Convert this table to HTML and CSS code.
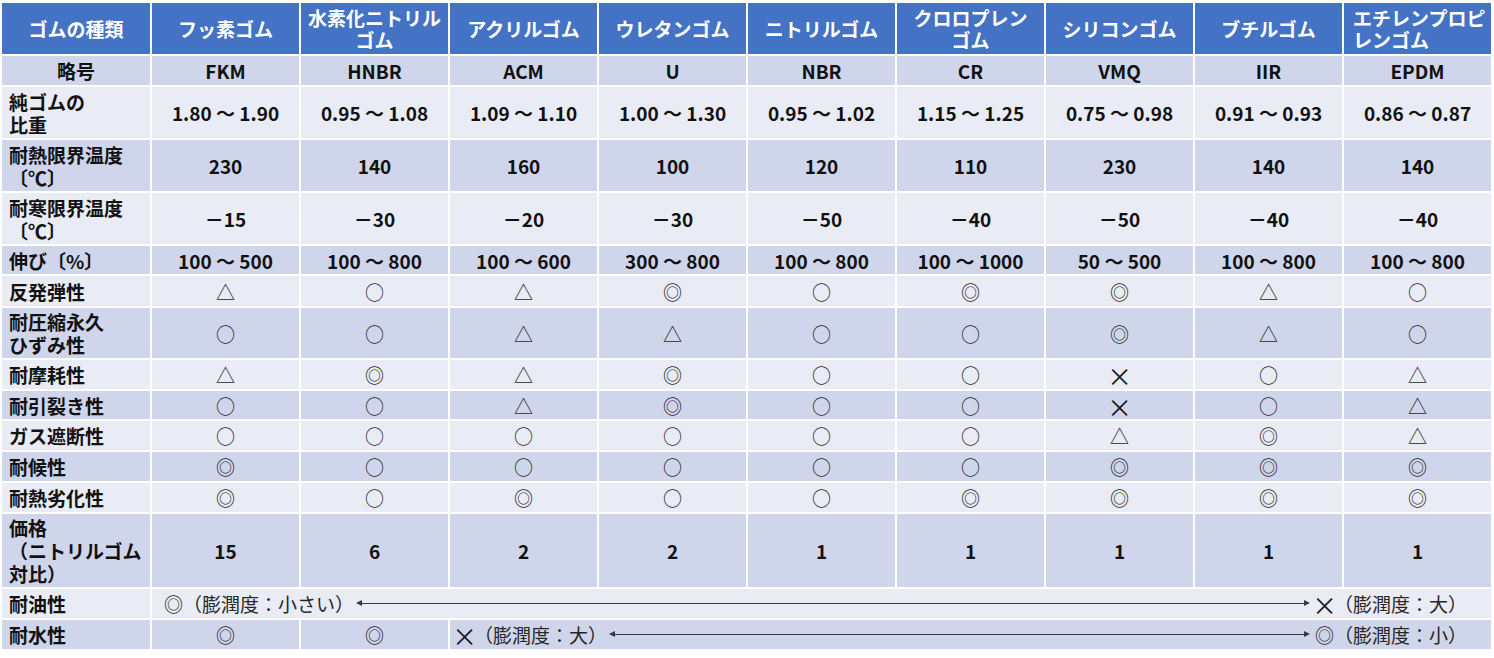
FILE: index.html
```html
<!DOCTYPE html>
<html lang="ja">
<head>
<meta charset="utf-8">
<title>ゴムの種類と特性</title>
<link rel="stylesheet" href="styles.css">
</head>
<body>
<div class="sheet">
  <div class="row head">
    <div class="cell">ゴムの種類</div>
    <div class="cell">フッ素ゴム</div>
    <div class="cell">水素化ニトリル<br>ゴム</div>
    <div class="cell">アクリルゴム</div>
    <div class="cell">ウレタンゴム</div>
    <div class="cell">ニトリルゴム</div>
    <div class="cell">クロロプレン<br>ゴム</div>
    <div class="cell">シリコンゴム</div>
    <div class="cell">ブチルゴム</div>
    <div class="cell cell-left">エチレンプロピ<br>レンゴム</div>
  </div>
  <div class="row dark">
    <div class="cell label label-center">略号</div>
    <div class="cell">FKM</div><div class="cell">HNBR</div><div class="cell">ACM</div><div class="cell">U</div><div class="cell">NBR</div><div class="cell">CR</div><div class="cell">VMQ</div><div class="cell">IIR</div><div class="cell">EPDM</div>
  </div>
  <div class="row light">
    <div class="cell label">純ゴムの<br>比重</div>
    <div class="cell">1.80 ～ 1.90</div><div class="cell">0.95 ～ 1.08</div><div class="cell">1.09 ～ 1.10</div><div class="cell">1.00 ～ 1.30</div><div class="cell">0.95 ～ 1.02</div><div class="cell">1.15 ～ 1.25</div><div class="cell">0.75 ～ 0.98</div><div class="cell">0.91 ～ 0.93</div><div class="cell">0.86 ～ 0.87</div>
  </div>
  <div class="row dark">
    <div class="cell label">耐熱限界温度<br>〔℃〕</div>
    <div class="cell">230</div><div class="cell">140</div><div class="cell">160</div><div class="cell">100</div><div class="cell">120</div><div class="cell">110</div><div class="cell">230</div><div class="cell">140</div><div class="cell">140</div>
  </div>
  <div class="row light">
    <div class="cell label">耐寒限界温度<br>〔℃〕</div>
    <div class="cell">－15</div><div class="cell">－30</div><div class="cell">－20</div><div class="cell">－30</div><div class="cell">－50</div><div class="cell">－40</div><div class="cell">－50</div><div class="cell">－40</div><div class="cell">－40</div>
  </div>
  <div class="row dark">
    <div class="cell label">伸び〔%〕</div>
    <div class="cell">100 ～ 500</div><div class="cell">100 ～ 800</div><div class="cell">100 ～ 600</div><div class="cell">300 ～ 800</div><div class="cell">100 ～ 800</div><div class="cell">100 ～ 1000</div><div class="cell">50 ～ 500</div><div class="cell">100 ～ 800</div><div class="cell">100 ～ 800</div>
  </div>
  <div class="row light sym">
    <div class="cell label">反発弾性</div>
    <div class="cell">△</div><div class="cell">○</div><div class="cell">△</div><div class="cell">◎</div><div class="cell">○</div><div class="cell">◎</div><div class="cell">◎</div><div class="cell">△</div><div class="cell">○</div>
  </div>
  <div class="row dark sym">
    <div class="cell label">耐圧縮永久<br>ひずみ性</div>
    <div class="cell">○</div><div class="cell">○</div><div class="cell">△</div><div class="cell">△</div><div class="cell">○</div><div class="cell">○</div><div class="cell">◎</div><div class="cell">△</div><div class="cell">○</div>
  </div>
  <div class="row light sym">
    <div class="cell label">耐摩耗性</div>
    <div class="cell">△</div><div class="cell">◎</div><div class="cell">△</div><div class="cell">◎</div><div class="cell">○</div><div class="cell">○</div><div class="cell"><span class="cross">×</span></div><div class="cell">○</div><div class="cell">△</div>
  </div>
  <div class="row dark sym">
    <div class="cell label">耐引裂き性</div>
    <div class="cell">○</div><div class="cell">○</div><div class="cell">△</div><div class="cell">◎</div><div class="cell">○</div><div class="cell">○</div><div class="cell"><span class="cross">×</span></div><div class="cell">○</div><div class="cell">△</div>
  </div>
  <div class="row light sym">
    <div class="cell label">ガス遮断性</div>
    <div class="cell">○</div><div class="cell">○</div><div class="cell">○</div><div class="cell">○</div><div class="cell">○</div><div class="cell">○</div><div class="cell">△</div><div class="cell">◎</div><div class="cell">△</div>
  </div>
  <div class="row dark sym">
    <div class="cell label">耐候性</div>
    <div class="cell">◎</div><div class="cell">○</div><div class="cell">○</div><div class="cell">○</div><div class="cell">○</div><div class="cell">○</div><div class="cell">◎</div><div class="cell">◎</div><div class="cell">◎</div>
  </div>
  <div class="row light sym">
    <div class="cell label">耐熱劣化性</div>
    <div class="cell">◎</div><div class="cell">○</div><div class="cell">◎</div><div class="cell">○</div><div class="cell">○</div><div class="cell">◎</div><div class="cell">◎</div><div class="cell">◎</div><div class="cell">◎</div>
  </div>
  <div class="row dark">
    <div class="cell label">価格<br>（ニトリルゴム<br>対比）</div>
    <div class="cell">15</div><div class="cell">6</div><div class="cell">2</div><div class="cell">2</div><div class="cell">1</div><div class="cell">1</div><div class="cell">1</div><div class="cell">1</div><div class="cell">1</div>
  </div>
  <div class="row light sym">
    <div class="cell label">耐油性</div>
    <div class="cell span-9 range range-oil">
      <span>◎（膨潤度：小さい）</span>
      <span class="arrow"></span>
      <span><span class="cross">×</span>（膨潤度：大）</span>
    </div>
  </div>
  <div class="row dark sym">
    <div class="cell label">耐水性</div>
    <div class="cell">◎</div><div class="cell">◎</div>
    <div class="cell span-7 range range-water">
      <span><span class="cross">×</span>（膨潤度：大）</span>
      <span class="arrow"></span>
      <span>◎（膨潤度：小）</span>
    </div>
  </div>
</div>
</body>
</html>
```

FILE: styles.css
```css
html, body {
  margin: 0;
  padding: 0;
  background: #ffffff;
}

body {
  font-family: "Noto Sans CJK JP", "Noto Sans", sans-serif;
  color: #111111;
}

.sheet {
  display: grid;
  width: 1489px;
  margin: 3px 0 0 2px;
  grid-template-columns: 148px repeat(9, 1fr);
  grid-template-rows: 51px 29px 51px 51px 51px 28px 30px 50px 29px 28px 29px 29px 29px 73px 29px 29px;
  gap: 2px;
  background: #ffffff;
}

.row {
  display: contents;
}

.cell {
  display: flex;
  align-items: center;
  justify-content: center;
  text-align: center;
  font-size: 19px;
  font-weight: 700;
  line-height: 23px;
  white-space: nowrap;
}

.row.head > .cell {
  background: #4472c4;
  color: #ffffff;
  line-height: 22px;
}

.row.dark > .cell {
  background: #cfd5ea;
}

.row.light > .cell {
  background: #e9ebf5;
}

.row.sym > .cell {
  font-weight: 400;
  color: #262626;
}

.row > .cell.label,
.row.sym > .cell.label {
  justify-content: flex-start;
  text-align: left;
  padding-left: 7px;
  font-weight: 700;
  color: #111111;
  line-height: 23px;
}

.row > .cell.label-center {
  justify-content: center;
  text-align: center;
  padding-left: 0;
}

.row.head > .cell-left {
  justify-content: flex-start;
  text-align: left;
  padding-left: 9px;
}

.cross {
  display: inline-block;
  transform: scale(1.3);
  color: #1a1a1a;
}

.span-9 {
  grid-column: span 9;
}

.span-7 {
  grid-column: span 7;
}

.row > .cell.range {
  justify-content: flex-start;
  padding-right: 24px;
}

.range-oil {
  padding-left: 12px;
}

.range-water {
  padding-left: 5px;
}

.arrow {
  position: relative;
  flex: 1;
  height: 1px;
  background: #3a3a3a;
  margin: 0 7px 0 4px;
}

.arrow::before,
.arrow::after {
  content: "";
  position: absolute;
  top: -3px;
  border-top: 3.5px solid transparent;
  border-bottom: 3.5px solid transparent;
}

.arrow::before {
  left: -2px;
  border-right: 6px solid #3a3a3a;
}

.arrow::after {
  right: -2px;
  border-left: 6px solid #3a3a3a;
}
```
